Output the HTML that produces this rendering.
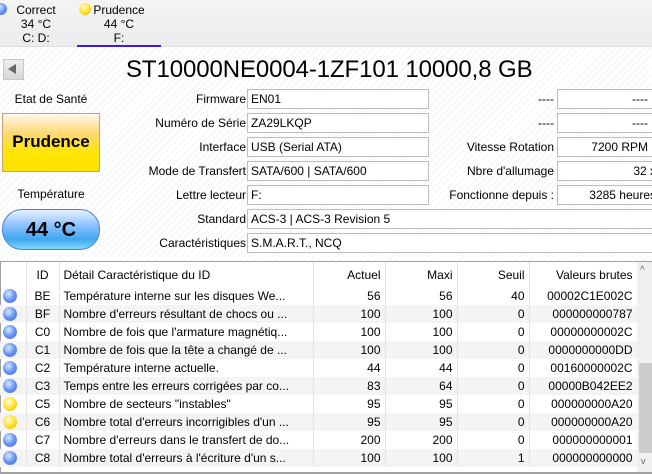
<!DOCTYPE html>
<html><head><meta charset="utf-8"><style>
*{margin:0;padding:0;box-sizing:border-box}
body{width:652px;height:474px;overflow:hidden;position:relative;font-family:"Liberation Sans","DejaVu Sans",sans-serif;font-size:12px;color:#000;
background:repeating-linear-gradient(135deg,#fff 0,#fff 3px,#f3f3f3 4px,#fff 5px);}
.a{position:absolute;white-space:nowrap}
.top{left:0;top:0;width:652px;height:47px;background:linear-gradient(#f4f4f4,#ececec);border-bottom:1px solid #ddd}
.tab{text-align:center;line-height:14px;font-size:12px}
.dot{position:absolute;width:12px;height:12px;border-radius:50%}
.blue{background:radial-gradient(circle at 40% 35%,#d8e8ff,#5a8ef0 55%,#7a62e0)}
.yel{background:radial-gradient(circle at 40% 35%,#fffbe0,#ffe020 55%,#e0a800)}
.lbl{text-align:right}
.box{position:absolute;height:20px;border:1px solid #bdbdbd;background:#fff;line-height:18px;padding:0 3px;white-space:nowrap;overflow:hidden}
.r{text-align:right}
table{position:absolute;left:0;top:262px;width:637px;border-collapse:collapse;table-layout:fixed}
td,th{height:18px;padding:0 4px;font-weight:normal;white-space:nowrap;overflow:hidden;line-height:18px}
th{height:25px;text-align:right;border-right:1px solid #e4e4e4}
tbody tr:nth-child(even){background:#f4f4f4}
tbody td{border-right:1px solid #e4e4e4;text-align:right}
td.l{text-align:left}
.tw{position:absolute;left:0;top:261px;width:652px;height:213px;border-top:1px solid #a0a0a0;border-left:1px solid #a0a0a0;background:#fff}
.d{position:relative;width:14px;height:14px;left:-1px}
</style></head><body>
<div class="a top"></div>
<div class="dot blue" style="left:-5px;top:3px"></div>
<div class="a tab" style="left:14px;top:3px;width:44px">Correct<br>34 °C<br>C: D:</div>
<div class="dot yel" style="left:79px;top:3px"></div>
<div class="a tab" style="left:90px;top:3px;width:58px">Prudence<br>44 °C<br>F:</div>
<div class="a" style="left:77px;top:45px;width:84px;height:2px;background:#3a18e6"></div>

<div class="a" style="left:3px;top:59px;width:21px;height:21px;background:linear-gradient(#eee,#d6d6d6);border:1px solid #c8c8c8"></div>
<div class="a" style="left:8px;top:64px;width:0;height:0;border-top:5px solid transparent;border-bottom:5px solid transparent;border-right:8px solid #666"></div>
<div class="a" style="left:126px;top:56px;font-size:24px;line-height:28px;letter-spacing:-0.1px">ST10000NE0004-1ZF101 10000,8 GB</div>

<div class="a" style="left:0;top:92px;width:102px;text-align:center">Etat de Santé</div>
<div class="a" style="left:2px;top:113px;width:98px;height:59px;border:1px solid #d2a070;background:linear-gradient(#fff8f0 0%,#ffd870 35%,#ffe600 70%,#ffe000 100%);text-align:center;line-height:56px;font-weight:bold;font-size:17px">Prudence</div>
<div class="a" style="left:0;top:187px;width:102px;text-align:center">Température</div>
<div class="a" style="left:2px;top:209px;width:98px;height:41px;border:1px solid #4a80d8;border-radius:20px;background:linear-gradient(#e8f2ff 0%,#8cc0ff 40%,#3ea8f0 75%,#80d8ff 100%);text-align:center;line-height:40px;font-weight:bold;font-size:20px">44 °C</div>

<div class="a lbl" style="right:406px;top:92px">Firmware</div>
<div class="a lbl" style="right:406px;top:116px">Numéro de Série</div>
<div class="a lbl" style="right:406px;top:140px">Interface</div>
<div class="a lbl" style="right:406px;top:164px">Mode de Transfert</div>
<div class="a lbl" style="right:406px;top:188px">Lettre lecteur</div>
<div class="a lbl" style="right:406px;top:212px">Standard</div>
<div class="a lbl" style="right:406px;top:236px">Caractéristiques</div>
<div class="box" style="left:247px;top:89px;width:182px">EN01</div>
<div class="box" style="left:247px;top:113px;width:182px">ZA29LKQP</div>
<div class="box" style="left:247px;top:137px;width:182px">USB (Serial ATA)</div>
<div class="box" style="left:247px;top:161px;width:182px">SATA/600 | SATA/600</div>
<div class="box" style="left:247px;top:185px;width:182px">F:</div>
<div class="box" style="left:247px;top:209px;width:410px">ACS-3 | ACS-3 Revision 5</div>
<div class="box" style="left:247px;top:233px;width:410px">S.M.A.R.T., NCQ</div>

<div class="a lbl" style="right:98px;top:92px">----</div>
<div class="a lbl" style="right:98px;top:116px">----</div>
<div class="a lbl" style="right:98px;top:140px">Vitesse Rotation</div>
<div class="a lbl" style="right:98px;top:164px">Nbre d'allumage</div>
<div class="a lbl" style="right:98px;top:188px">Fonctionne depuis :</div>
<div class="box r" style="left:557px;top:89px;width:100px;padding-right:8px">----</div>
<div class="box r" style="left:557px;top:113px;width:100px;padding-right:8px">----</div>
<div class="box r" style="left:557px;top:137px;width:100px;padding-right:8px">7200 RPM</div>
<div class="box r" style="left:557px;top:161px;width:100px;padding-right:0">32 x</div>
<div class="box r" style="left:557px;top:185px;width:100px;padding-right:0">3285 heures</div>

<div class="tw"></div>
<table>
<colgroup><col style="width:26px"><col style="width:33px"><col style="width:254px"><col style="width:72px"><col style="width:72px"><col style="width:72px"><col style="width:108px"></colgroup>
<thead><tr><th></th><th style="text-align:center">ID</th><th style="text-align:left">Détail Caractéristique du ID</th><th>Actuel</th><th>Maxi</th><th>Seuil</th><th>Valeurs brutes</th></tr></thead>
<tbody>
<tr><td><div class="dot blue d"></div></td><td style="text-align:center">BE</td><td class="l">Température interne sur les disques We...</td><td>56</td><td>56</td><td>40</td><td>00002C1E002C</td></tr>
<tr><td><div class="dot blue d"></div></td><td style="text-align:center">BF</td><td class="l">Nombre d'erreurs résultant de chocs ou ...</td><td>100</td><td>100</td><td>0</td><td>000000000787</td></tr>
<tr><td><div class="dot blue d"></div></td><td style="text-align:center">C0</td><td class="l">Nombre de fois que l'armature magnétiq...</td><td>100</td><td>100</td><td>0</td><td>00000000002C</td></tr>
<tr><td><div class="dot blue d"></div></td><td style="text-align:center">C1</td><td class="l">Nombre de fois que la tête a changé de ...</td><td>100</td><td>100</td><td>0</td><td>0000000000DD</td></tr>
<tr><td><div class="dot blue d"></div></td><td style="text-align:center">C2</td><td class="l">Température interne actuelle.</td><td>44</td><td>44</td><td>0</td><td>00160000002C</td></tr>
<tr><td><div class="dot blue d"></div></td><td style="text-align:center">C3</td><td class="l">Temps entre les erreurs corrigées par co...</td><td>83</td><td>64</td><td>0</td><td>00000B042EE2</td></tr>
<tr><td><div class="dot yel d"></div></td><td style="text-align:center">C5</td><td class="l">Nombre de secteurs "instables"</td><td>95</td><td>95</td><td>0</td><td>000000000A20</td></tr>
<tr><td><div class="dot yel d"></div></td><td style="text-align:center">C6</td><td class="l">Nombre total d'erreurs incorrigibles d'un ...</td><td>95</td><td>95</td><td>0</td><td>000000000A20</td></tr>
<tr><td><div class="dot blue d"></div></td><td style="text-align:center">C7</td><td class="l">Nombre d'erreurs dans le transfert de do...</td><td>200</td><td>200</td><td>0</td><td>000000000001</td></tr>
<tr><td><div class="dot blue d"></div></td><td style="text-align:center">C8</td><td class="l">Nombre total d'erreurs à l'écriture d'un s...</td><td>100</td><td>100</td><td>1</td><td>000000000000</td></tr>
</tbody></table>
<div class="a" style="left:637px;top:262px;width:15px;height:212px;background:#f0f0f0"></div>
<div class="a" style="left:640px;top:265px;font-size:10px;color:#666">^</div>
<div class="a" style="left:639px;top:363px;width:13px;height:90px;background:#cdcdcd"></div>
<div class="a" style="left:641px;top:456px;font-size:9px;color:#666">v</div>
<div class="a" style="left:0;top:472px;width:652px;height:2px;background:#a0a0a0"></div>
</body></html>
